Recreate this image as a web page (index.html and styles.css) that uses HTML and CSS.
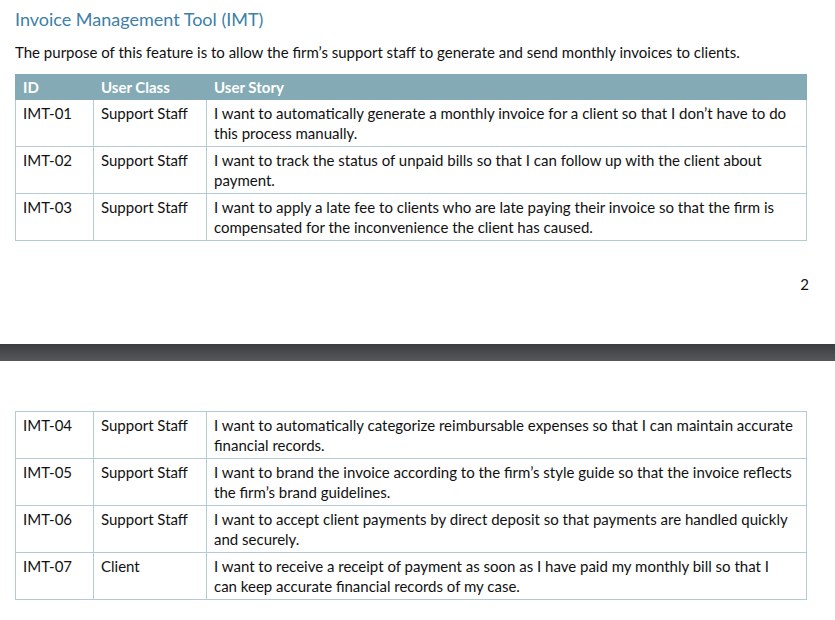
FILE: index.html
```html
<!DOCTYPE html>
<html>
<head>
<meta charset="utf-8">
<link rel="stylesheet" href="styles.css">
</head>
<body>
<section class="page page-first">
  <h2 class="title">Invoice Management Tool (IMT)</h2>
  <p class="intro">The purpose of this feature is to allow the firm’s support staff to generate and send monthly invoices to clients.</p>
  <table class="stories">
    <colgroup><col class="c-id"><col class="c-class"><col class="c-story"></colgroup>
    <thead>
      <tr><th>ID</th><th>User Class</th><th>User Story</th></tr>
    </thead>
    <tbody>
      <tr><td>IMT-01</td><td>Support Staff</td><td>I want to automatically generate a monthly invoice for a client so that I don’t have to do this process manually.</td></tr>
      <tr><td>IMT-02</td><td>Support Staff</td><td>I want to track the status of unpaid bills so that I can follow up with the client about payment.</td></tr>
      <tr><td>IMT-03</td><td>Support Staff</td><td>I want to apply a late fee to clients who are late paying their invoice so that the firm is compensated for the inconvenience the client has caused.</td></tr>
    </tbody>
  </table>
  <div class="page-num">2</div>
</section>
<div class="page-gap"></div>
<section class="page page-second">
  <table class="stories">
    <colgroup><col class="c-id"><col class="c-class"><col class="c-story"></colgroup>
    <tbody>
      <tr><td>IMT-04</td><td>Support Staff</td><td>I want to automatically categorize reimbursable expenses so that I can maintain accurate financial records.</td></tr>
      <tr><td>IMT-05</td><td>Support Staff</td><td>I want to brand the invoice according to the firm’s style guide so that the invoice reflects the firm’s brand guidelines.</td></tr>
      <tr><td>IMT-06</td><td>Support Staff</td><td>I want to accept client payments by direct deposit so that payments are handled quickly and securely.</td></tr>
      <tr><td>IMT-07</td><td>Client</td><td>I want to receive a receipt of payment as soon as I have paid my monthly bill so that I can keep accurate financial records of my case.</td></tr>
    </tbody>
  </table>
</section>
</body>
</html>
```
FILE: styles.css
```css
html, body {
  margin: 0;
  padding: 0;
  background: #ffffff;
}
body {
  font-family: "Lato", "Open Sans", sans-serif;
  color: #111111;
  font-size: 15px;
}
.page {
  padding: 0 29px 0 15px;
}
.page-first {
  padding-top: 7px;
}
.title {
  margin: 0;
  font-weight: 400;
  font-size: 18px;
  line-height: 24px;
  color: #3d7fa6;
}
.intro {
  margin: 11px 0 12px 0;
  font-size: 15px;
  line-height: 20px;
}
.stories {
  width: 791px;
  border-collapse: collapse;
  table-layout: fixed;
}
.c-id { width: 78px; }
.c-class { width: 113px; }
.c-story { width: 600px; }
.stories th {
  background: #84abb5;
  color: #ffffff;
  font-weight: 700;
  text-align: left;
  height: 24px;
  padding: 0 6px 0 7px;
  line-height: 22px;
  border: 1px solid #84abb5;
}
.stories td {
  border: 1px solid #b3cbd2;
  vertical-align: top;
  padding: 3px 6px 3px 7px;
  line-height: 20px;
  height: 40px;
}
.stories td:last-child {
  padding-right: 11px;
}
.page-num {
  text-align: right;
  margin: 33px -3px 0 0;
  font-size: 15px;
  line-height: 20px;
}
.page-gap {
  margin-top: 50px;
  height: 17px;
  background: linear-gradient(#3a3d40, #55595c);
}
.page-second {
  padding-top: 50px;
}
```
